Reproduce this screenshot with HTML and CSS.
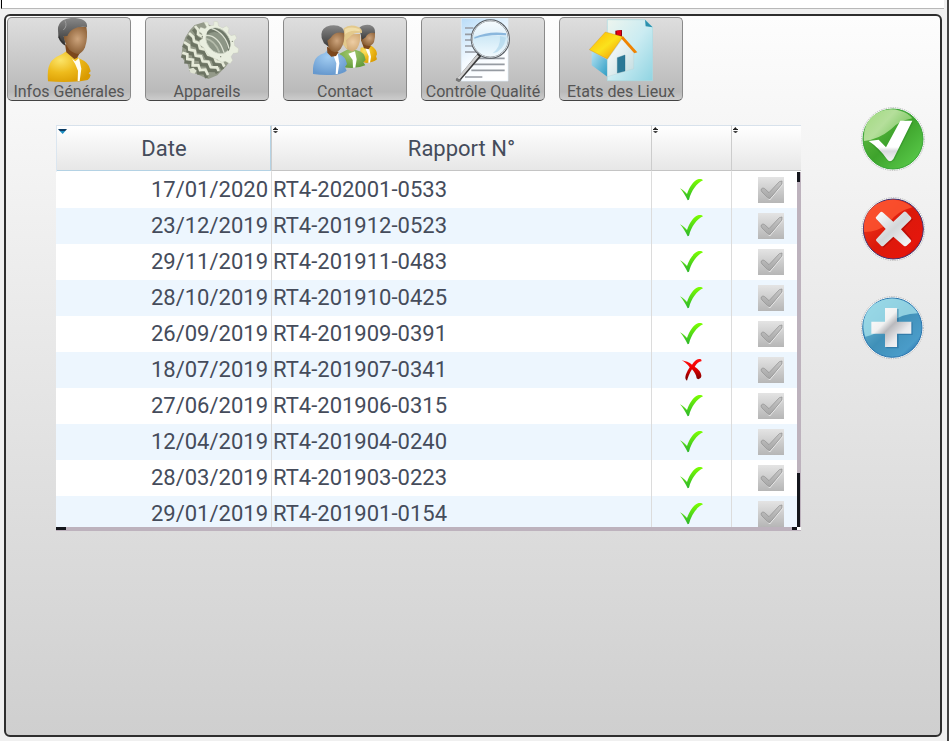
FILE: index.html
```
<!DOCTYPE html>
<html lang="fr">
<head>
    <meta charset="UTF-8">
    <meta name="viewport" content="width=device-width, initial-scale=1.0">
    <title>Contrôle Qualité</title>
    <link rel="stylesheet" href="styles.css">
</head>
<body>
    <!-- Shared icons -->
    <svg class="sprite" aria-hidden="true">
        <defs>
            <linearGradient id="g-ok" x1="0" y1="0" x2="0" y2="1"><stop offset="0" stop-color="#7cff00"/><stop offset="1" stop-color="#2cb52c"/></linearGradient>
            <linearGradient id="g-ko" x1="0" y1="0" x2="0" y2="1"><stop offset="0" stop-color="#ff1010"/><stop offset=".4" stop-color="#f00000"/><stop offset="1" stop-color="#6e0000"/></linearGradient>
            <linearGradient id="g-grey" x1="0" y1="0" x2="0" y2="1"><stop offset="0" stop-color="#c6c6c6"/><stop offset="1" stop-color="#a6a6a6"/></linearGradient>
            <linearGradient id="g-hair" x1="0" y1="0" x2="0" y2="1"><stop offset="0" stop-color="#888"/><stop offset="1" stop-color="#3a3a3a"/></linearGradient>
            <radialGradient id="g-skin" cx=".6" cy=".45" r=".6"><stop offset="0" stop-color="#cda47c"/><stop offset="1" stop-color="#84582f"/></radialGradient>
            <radialGradient id="g-fair" cx=".6" cy=".45" r=".6"><stop offset="0" stop-color="#edcda4"/><stop offset="1" stop-color="#cda46c"/></radialGradient>
            <radialGradient id="g-yellow" cx=".3" cy=".3" r=".8"><stop offset="0" stop-color="#fbe468"/><stop offset=".5" stop-color="#eebb1c"/><stop offset="1" stop-color="#d99a00"/></radialGradient>
            <radialGradient id="g-blue" cx=".45" cy=".3" r=".7"><stop offset="0" stop-color="#a2cdf2"/><stop offset="1" stop-color="#6799ce"/></radialGradient>
            <radialGradient id="g-green" cx=".45" cy=".3" r=".7"><stop offset="0" stop-color="#a2c96c"/><stop offset="1" stop-color="#649c3c"/></radialGradient>
        </defs>
        <symbol id="i-ok" viewBox="0 0 72 66">
            <path fill="url(#g-ok)" d="M0 28C9 33 16 39 21 45C28 25 40 6 54 1C60-1 67 1 69 4C50 12 34 36 27 62L23 64C16 50 9 38 0 28Z"/>
        </symbol>
        <symbol id="i-ko" viewBox="0 0 72 66">
            <path fill="url(#g-ko)" d="M5 4C17 6 28 10 36 17C42 8 49 1 57 0C62-1 66 2 64 7C57 8 50 13 44 23C57 31 65 42 64 52C63 60 53 63 50 58C49 48 43 38 36 31C28 43 24 56 21 65C15 61 15 55 18 46C21 38 25 31 29 25C22 15 14 9 5 4Z"/>
        </symbol>
        <symbol id="i-tick" viewBox="0 0 78 78">
            <path fill="none" stroke="#ececec" stroke-width="3" d="M12 42L35 69L74 22"/>
            <path fill="url(#g-grey)" stroke="#8c8c8c" stroke-width="2" stroke-linejoin="round" d="M10 36C13 32 17 33 20 35L33 47L64 14L72 12L71 22L39 61Q34 68 29 62L12 45Q8 40 10 36Z"/>
        </symbol>
        <symbol id="i-sort" viewBox="0 0 15 18">
            <path fill="#222" d="M7 0L12 6H15V9H0V6H2Z"/><path fill="#444" d="M0 12H15L9 18H6Z"/>
        </symbol>
    </svg>

    <div class="top-strip"></div>

    <div class="panel">
        <nav class="tabs">
            <button class="tab" type="button">
                <svg class="tab-icon" viewBox="111 54 192 192" aria-hidden="true">
                    <path fill="url(#g-yellow)" d="M144 244Q140 200 155 182Q168 169 187 162L200 153L240 176Q266 187 270 207L272 214L266 220L272 225Q270 236 263 240L241 244Q190 248 144 244Z"/>
                    <path fill="#fffdf2" d="M216 176L226 184L237 174L244 206L239 243L233 243L234 212Q227 191 216 176Z"/>
                    <path fill="#7c471c" d="M195 132L240 158L231 174L223 177L199 157Z"/>
                    <path fill="url(#g-skin)" d="M190 108L215 82L259 80Q265 112 255 142Q248 158 236 162Q221 161 208 149Q196 135 190 108Z"/>
                    <path fill="#333" d="M176 92L191 111L196 137Q181 130 175 112Z"/>
                    <path fill="url(#g-hair)" d="M176 102Q168 75 189 61Q215 48 245 58Q263 65 261 81Q236 78 222 86Q208 93 202 108L190 109L196 130Q181 122 176 102Z"/>
                    <path fill="none" stroke="#9c9c9c" stroke-width="3" d="M195 62Q203 79 190 90"/>
                </svg>
                Infos Générales
            </button>
            <button class="tab" type="button">
                <svg class="tab-icon" viewBox="525 54 192 192" aria-hidden="true">
                    <!-- barrel -->
                    <path fill="#949a89" d="M611 67L584 75L570 90L556 112L548 135L545 162L549 178L562 190L570 216L590 222L612 232L625 237L652 226L677 200L692 180L690 120L640 80Z"/>
                    <!-- helical teeth, shadow then light edge -->
                    <g fill="none" stroke-linejoin="miter" stroke="#6d7463" stroke-width="10">
                        <path d="M544 168L560 173L558 186L576 188L574 207L592 205L596 219L614 218L620 234"/>
                        <path d="M549 136L564 146L564 159L580 162L583 177L600 179L604 194L621 195L628 211L648 212L652 220"/>
                        <path d="M562 110L576 121L577 134L592 139L596 155L612 158L620 174L638 178L644 194L662 196L668 208"/>
                        <path d="M580 88L590 101L588 113L602 120"/>
                    </g>
                    <g fill="none" stroke-linejoin="miter" stroke="#e6ead9" stroke-width="8">
                        <path d="M547 158L562 163L562 177L579 179L578 196L595 196L600 210L616 209L624 225"/>
                        <path d="M552 126L567 136L568 149L584 152L587 167L603 169L608 184L625 185L632 201L651 202L656 213"/>
                        <path d="M567 99L580 111L582 124L596 129L600 145L616 148L624 164L642 168L648 184L666 186L673 200"/>
                        <path d="M585 78L595 90L594 103L607 110"/>
                    </g>
                    <path fill="#dfe3d2" d="M566 207L580 203L590 212L584 221L572 218Z"/>
                    <!-- front face -->
                    <path fill="#e9eedf" stroke="#c2c7b6" stroke-width="1" d="M612 67L623 66L627 78L641 76L642 64L653 65L656 78L668 84L679 78L687 85L684 98L693 107L705 104L710 114L702 124L704 137L716 146L714 158L700 160L693 170L698 181L690 191L676 184L666 187L650 178L633 171L621 160L611 143L600 135L598 122L608 116L606 101L595 93L602 82L615 86L620 81Z"/>
                    <ellipse fill="#8d9686" stroke="#d5dacb" stroke-width="2" cx="654" cy="122" rx="33" ry="42" transform="rotate(-38 654 122)"/>
                    <path fill="#6f7869" d="M620 104Q622 84 646 84Q676 90 690 124Q694 145 684 154Q682 120 660 101Q641 89 620 104Z"/>
                    <path fill="none" stroke="#dde2d3" stroke-width="4" d="M617 106Q655 104 672 158M634 85Q676 98 687 146"/>
                    <path fill="none" stroke="#b5bcab" stroke-width="5" d="M618 116Q644 122 658 157"/>
                    <g fill="#7c8372"><circle cx="607" cy="110" r="2"/><circle cx="662" cy="170" r="2"/><circle cx="697" cy="124" r="2"/></g>
                </svg>
                Appareils
            </button>
            <button class="tab" type="button">
                <svg class="tab-icon" viewBox="129 54 192 192" aria-hidden="true">
                    <path fill="url(#g-yellow)" d="M268 184L272 143L304 137Q321 148 321 163L318 169L321 178Q310 188 289 189Z"/>
                    <path fill="#fff" d="M286 145L297 145L303 170L300 188L295 188L296 169Z"/>
                    <path fill="#7c471c" d="M275 126L303 137L296 148L282 145Z"/>
                    <path fill="url(#g-skin)" d="M273 101L315 95Q317 132 300 138Q280 139 273 122Z"/>
                    <path fill="url(#g-hair)" d="M267 84Q280 72 300 75Q317 81 315 99Q294 95 287 112L276 119Z"/>
                    <path fill="url(#g-green)" d="M207 162L241 144L260 151Q285 157 287 180L280 187L286 196Q260 208 220 202Z"/>
                    <path fill="#fff" d="M235 161L255 154L260 178L256 203L249 203L248 180Z"/>
                    <path fill="url(#g-fair)" d="M223 103L270 102Q273 126 261 146L247 155L229 146L215 126Z"/>
                    <path fill="#e3c98c" d="M221 85Q239 71 263 80Q278 85 276 99Q251 96 239 112L228 121L232 148L216 130Z"/>
                    <path fill="#f0dda8" d="M225 87Q247 78 269 88L270 94Q239 88 226 103Z"/>
                    <path fill="url(#g-blue)" d="M129 222Q127 184 142 170Q151 162 164 159L175 148L207 162Q227 169 231 192L225 201L230 212Q218 221 197 224Q160 227 129 222Z"/>
                    <path fill="#fff" d="M190 166L203 160L208 190L203 222L197 222L199 190Z"/>
                    <path fill="#7c471c" d="M171 140L206 156L198 168L184 170L172 158Z"/>
                    <path fill="url(#g-skin)" d="M167 113L187 95L222 94Q226 125 213 145Q205 157 194 157Q172 151 167 113Z"/>
                    <path fill="url(#g-hair)" d="M155 114Q150 90 169 80Q196 70 216 83Q224 90 222 99Q194 93 182 113L172 122L176 140L162 130Z"/>
                </svg>
                Contact
            </button>
            <button class="tab" type="button">
                <svg class="tab-icon" viewBox="543 54 192 192" aria-hidden="true">
                    <defs>
                        <linearGradient id="g-doc" x1="0" y1="0" x2=".5" y2="1"><stop offset="0" stop-color="#b9dcf8"/><stop offset=".6" stop-color="#f4faff"/><stop offset="1" stop-color="#fff"/></linearGradient>
                        <linearGradient id="g-lens" x1="0" y1="0" x2="0" y2="1"><stop offset="0" stop-color="#f7fcff"/><stop offset=".4" stop-color="#e2f1fa"/><stop offset=".42" stop-color="#cde8f6"/><stop offset="1" stop-color="#f4fbff"/></linearGradient>
                    </defs>
                    <path fill="url(#g-doc)" stroke="#e2f0fa" stroke-width="2" d="M574 55H714V243H574Z"/>
                    <path stroke="#969ba2" stroke-width="5" d="M585 84H610M585 103H610M585 120H610M585 138H615M585 156H625M620 175H704M612 193H704M604 211H704M585 231H637"/>
                    <circle cx="661" cy="117" r="56" fill="url(#g-lens)" stroke="#555b61" stroke-width="6"/>
                    <circle cx="661" cy="117" r="55" fill="none" stroke="#d3d8dc" stroke-width="3"/>
                    <path fill="#8ab7dd" d="M613 112Q656 92 709 100L708 106Q660 101 613 116Z"/>
                    <path fill="#a8d2ea" opacity=".6" d="M690 108Q693 140 668 160Q701 153 708 113Z"/>
                    <path fill="#3b3b3b" d="M624 160L634 169L570 243Q562 247 558 239Z"/>
                    <path fill="#d0d0d0" d="M621 164L627 169L568 239L561 235Z"/>
                    <path fill="#777" d="M559 234L574 239L568 246L557 241Z"/>
                </svg>
                Contrôle Qualité
            </button>
            <button class="tab" type="button">
                <svg class="tab-icon" viewBox="147 54 192 192" aria-hidden="true">
                    <defs>
                        <linearGradient id="g-sheet" x1="0" y1="0" x2="1" y2="1"><stop offset="0" stop-color="#edf5ee"/><stop offset=".5" stop-color="#cbecf2"/><stop offset="1" stop-color="#90d4e2"/></linearGradient>
                        <linearGradient id="g-roof" x1="0" y1="0" x2="1" y2="1"><stop offset="0" stop-color="#ffb400"/><stop offset=".5" stop-color="#fbe21c"/><stop offset="1" stop-color="#f18a00"/></linearGradient>
                        <linearGradient id="g-wall" x1="0" y1="0" x2="1" y2="1"><stop offset="0" stop-color="#b5e2f2"/><stop offset="1" stop-color="#2d9dc4"/></linearGradient>
                        <linearGradient id="g-front" x1="0" y1="0" x2="1" y2="1"><stop offset="0" stop-color="#fff"/><stop offset="1" stop-color="#c1dce0"/></linearGradient>
                    </defs>
                    <path fill="url(#g-sheet)" stroke="#aadbe3" stroke-width="2" d="M202 59H315L338 82V242H202Z"/>
                    <path fill="#2b91ae" d="M315 59L338 82L317 79Z"/>
                    <path fill="url(#g-wall)" d="M155 154L202 179V230L155 196Z"/>
                    <path fill="url(#g-front)" stroke="#b5cdd0" stroke-width="1" d="M202 179L247 116L281 157V206L202 230Z"/>
                    <path fill="#2b7896" stroke="#196480" stroke-width="1" d="M232 173L255 165V213L232 219Z"/>
                    <path fill="#8c0010" d="M226 92L246 90V112L226 108Z"/><path fill="#e60012" d="M230 92L243 91V106L230 104Z"/>
                    <path fill="url(#g-roof)" stroke="#c98a1a" stroke-width="1" d="M148 149L196 96L249 110L202 177Z"/>
                    <path fill="#f08300" d="M243 115L249 109L292 157L283 160Z"/>
                </svg>
                Etats des Lieux
            </button>
        </nav>

        <main class="content">
            <div class="grid-frame">
                <table class="grid">
                    <colgroup><col class="col-date"><col><col class="col-state"><col class="col-tick"></colgroup>
                    <thead>
                        <tr>
                            <th class="sorted"><svg class="sort-icon" viewBox="0 0 27 15" aria-hidden="true"><path fill="#0b3d66" d="M0 0H27L22 6H5Z"/><path fill="#1e8fc2" d="M5 6H22L14 15Z"/></svg>Date</th>
                            <th><svg class="sort-icon small"><use href="#i-sort"/></svg>Rapport N°</th>
                            <th><svg class="sort-icon small"><use href="#i-sort"/></svg></th>
                            <th><svg class="sort-icon small"><use href="#i-sort"/></svg></th>
                        </tr>
                    </thead>
                    <tbody>
                        <tr><td class="date">17/01/2020</td><td>RT4-202001-0533</td><td class="state"><svg class="state-icon"><use href="#i-ok"/></svg></td><td class="tick"><label class="tick-box"><input type="checkbox" aria-label="RT4-202001-0533"><svg><use href="#i-tick"/></svg></label></td></tr>
                        <tr><td class="date">23/12/2019</td><td>RT4-201912-0523</td><td class="state"><svg class="state-icon"><use href="#i-ok"/></svg></td><td class="tick"><label class="tick-box"><input type="checkbox" aria-label="RT4-201912-0523"><svg><use href="#i-tick"/></svg></label></td></tr>
                        <tr><td class="date">29/11/2019</td><td>RT4-201911-0483</td><td class="state"><svg class="state-icon"><use href="#i-ok"/></svg></td><td class="tick"><label class="tick-box"><input type="checkbox" aria-label="RT4-201911-0483"><svg><use href="#i-tick"/></svg></label></td></tr>
                        <tr><td class="date">28/10/2019</td><td>RT4-201910-0425</td><td class="state"><svg class="state-icon"><use href="#i-ok"/></svg></td><td class="tick"><label class="tick-box"><input type="checkbox" aria-label="RT4-201910-0425"><svg><use href="#i-tick"/></svg></label></td></tr>
                        <tr><td class="date">26/09/2019</td><td>RT4-201909-0391</td><td class="state"><svg class="state-icon"><use href="#i-ok"/></svg></td><td class="tick"><label class="tick-box"><input type="checkbox" aria-label="RT4-201909-0391"><svg><use href="#i-tick"/></svg></label></td></tr>
                        <tr><td class="date">18/07/2019</td><td>RT4-201907-0341</td><td class="state"><svg class="state-icon"><use href="#i-ko"/></svg></td><td class="tick"><label class="tick-box"><input type="checkbox" aria-label="RT4-201907-0341"><svg><use href="#i-tick"/></svg></label></td></tr>
                        <tr><td class="date">27/06/2019</td><td>RT4-201906-0315</td><td class="state"><svg class="state-icon"><use href="#i-ok"/></svg></td><td class="tick"><label class="tick-box"><input type="checkbox" aria-label="RT4-201906-0315"><svg><use href="#i-tick"/></svg></label></td></tr>
                        <tr><td class="date">12/04/2019</td><td>RT4-201904-0240</td><td class="state"><svg class="state-icon"><use href="#i-ok"/></svg></td><td class="tick"><label class="tick-box"><input type="checkbox" aria-label="RT4-201904-0240"><svg><use href="#i-tick"/></svg></label></td></tr>
                        <tr><td class="date">28/03/2019</td><td>RT4-201903-0223</td><td class="state"><svg class="state-icon"><use href="#i-ok"/></svg></td><td class="tick"><label class="tick-box"><input type="checkbox" aria-label="RT4-201903-0223"><svg><use href="#i-tick"/></svg></label></td></tr>
                        <tr><td class="date">29/01/2019</td><td>RT4-201901-0154</td><td class="state"><svg class="state-icon"><use href="#i-ok"/></svg></td><td class="tick"><label class="tick-box"><input type="checkbox" aria-label="RT4-201901-0154"><svg><use href="#i-tick"/></svg></label></td></tr>
                    </tbody>
                </table>
                <div class="scroll-v"></div>
                <div class="scroll-h"></div>
            </div>

            <div class="actions">
                <div class="action-group">
                    <button class="action" type="button" aria-label="Valider">
                        <svg viewBox="63 51 192 192" aria-hidden="true">
                            <defs>
                                <linearGradient id="g-a1" x1="0" y1="0" x2="1" y2="1"><stop offset="0" stop-color="#6cc24a"/><stop offset=".5" stop-color="#3ea32c"/><stop offset=".85" stop-color="#55c445"/><stop offset="1" stop-color="#1c7c1c"/></linearGradient>
                                <linearGradient id="g-pale" x1="0" y1="0" x2="1" y2=".6"><stop offset="0" stop-color="#a6dc84"/><stop offset=".5" stop-color="#c0e4a6"/><stop offset="1" stop-color="#7cc860"/></linearGradient>
                                <linearGradient id="g-mark" x1="0" y1="0" x2="0" y2="1"><stop offset="0" stop-color="#fff"/><stop offset=".65" stop-color="#fff"/><stop offset=".75" stop-color="#d9d9dd"/><stop offset="1" stop-color="#f5f5f5"/></linearGradient>
                            </defs>
                            <circle class="halo" cx="159" cy="147" r="94"/>
                            <circle cx="159" cy="147" r="90" fill="url(#g-a1)" stroke="#36a335" stroke-width="3"/>
                            <path fill="url(#g-pale)" opacity=".9" d="M72 153Q68 103 101 76Q136 49 180 62Q205 69 217 85Q174 93 153 118Q116 149 72 153Z"/>
                            <path fill="#176c17" opacity=".25" d="M91 159L119 155L137 176L185 96L220 96L163 211L150 218Z"/>
                            <path fill="url(#g-mark)" d="M86 153L116 149L138 172L181 92H217L160 207Q150 220 141 208Q120 176 86 153Z"/>
                        </svg>
                    </button>
                    <button class="action" type="button" aria-label="Annuler">
                        <svg viewBox="63 321 192 192" aria-hidden="true">
                            <defs>
                                <linearGradient id="g-a2" x1="0" y1="0" x2="1" y2="1"><stop offset="0" stop-color="#f74420"/><stop offset=".5" stop-color="#db190b"/><stop offset=".8" stop-color="#e5160c"/><stop offset="1" stop-color="#9c0505"/></linearGradient>
                                <linearGradient id="g-cross" x1="0" y1="0" x2="1" y2="1"><stop offset="0" stop-color="#fff"/><stop offset=".5" stop-color="#d3d7d9"/><stop offset="1" stop-color="#fafafa"/></linearGradient>
                            </defs>
                            <circle class="halo" cx="160" cy="417" r="94"/>
                            <circle cx="160" cy="417" r="90" fill="url(#g-a2)" stroke="#3c3474" stroke-width="3"/>
                            <path fill="#fb5330" opacity=".85" d="M72 426Q66 368 112 341Q171 313 217 352Q171 364 147 398Q115 426 72 426Z"/>
                            <path fill="#8c0000" opacity=".4" d="M127 370L165 396L202 372L219 388L191 417L216 448L198 471L164 443L131 473L110 454L138 420L111 390Z"/>
                            <path fill="url(#g-cross)" d="M121 367Q124 364 128 367L160 395L191 366Q195 363 199 367L213 382Q216 386 212 389L183 418L212 449Q215 453 212 456L199 468Q195 470 191 467L160 440L131 467Q127 470 123 467L109 453Q106 449 110 446L137 417L109 387Q105 383 109 380Z"/>
                        </svg>
                    </button>
                </div>
                <button class="action" type="button" aria-label="Ajouter">
                    <svg viewBox="63 618 192 192" aria-hidden="true">
                        <defs>
                            <linearGradient id="g-a3" x1="0" y1="0" x2="1" y2="1"><stop offset="0" stop-color="#7fcbe0"/><stop offset=".5" stop-color="#4090b8"/><stop offset=".8" stop-color="#4a9cc9"/><stop offset="1" stop-color="#124f94"/></linearGradient>
                            <linearGradient id="g-plus" x1="0" y1="0" x2="1" y2="1"><stop offset="0" stop-color="#fff"/><stop offset=".35" stop-color="#f1f1f1"/><stop offset=".48" stop-color="#b9b9bd"/><stop offset=".7" stop-color="#e9e9ec"/><stop offset="1" stop-color="#fff"/></linearGradient>
                        </defs>
                        <circle class="halo" cx="157" cy="713" r="93"/>
                        <circle cx="157" cy="713" r="89" fill="url(#g-a3)" stroke="#2873ad" stroke-width="3"/>
                        <path fill="#a2dfea" opacity=".8" d="M76 740Q58 683 97 646Q147 610 202 638Q222 650 234 670Q184 671 151 698Q118 731 76 740Z"/>
                        <path fill="#104c80" opacity=".35" d="M139 657H176V697H218V735H176V775H139Z"/>
                        <path fill="url(#g-plus)" d="M135 654H171V695H214V731H171V771H135V731H94V695H135Z"/>
                    </svg>
                </button>
            </div>
        </main>
    </div>
</body>
</html>
```
FILE: styles.css
```
:root {
    --line: #2e2e2e;
    --text: #454c5b;
    --row-alt: #edf6fe;
    --bar: #bdb2bd;
    --thumb: #14161c;
}

* {
    box-sizing: border-box;
    margin: 0;
    padding: 0;
}

body {
    font-family: Roboto, "Liberation Sans", sans-serif;
    display: flex;
    flex-direction: column;
    min-height: 100vh;
    background: #f0f0f0;
    color: var(--text);
    border-right: 2px solid #444;
}

.sprite {
    position: absolute;
    width: 0;
    height: 0;
}

.top-strip {
    height: 9px;
    margin: 0 3px 5px 1px;
    background: #fff;
    border-left: 1px solid #000;
    border-bottom: 1px solid #b8b8b8;
}

/* Main panel */
.panel {
    flex: 1;
    margin: 0 5px 4px 4px;
    padding: 1px;
    border: 2px solid var(--line);
    border-radius: 6px;
    background: linear-gradient(#fdfdfd, #cfcfcf);
}

/* Tabs */
.tabs {
    display: flex;
    gap: 14px;
}

.tab {
    width: 124px;
    font-family: inherit;
    font-size: 16px;
    line-height: 16px;
    color: #555;
    text-align: center;
    white-space: nowrap;
    background: linear-gradient(#dedede, #bababa 90%, #cccccc);
    border: 1px solid #8a8a8a;
    border-bottom-color: #444;
    border-radius: 5px;
    cursor: pointer;
}

.tab-icon {
    display: block;
    width: 64px;
    height: 64px;
    margin: 0 auto 2px;
}

.content {
    display: flex;
    align-items: flex-start;
    padding: 6px 14px 0 49px;
}

/* Table */
.grid-frame {
    position: relative;
    flex: 1;
    height: 406px;
    margin-top: 18px;
    margin-right: 60px;
    overflow: hidden;
}

.grid {
    width: 100%;
    table-layout: fixed;
    border-collapse: separate;
    border-spacing: 0;
    font-size: 22px;
    line-height: 26px;
}

.col-date {
    width: 216px;
}

.col-state {
    width: 80px;
}

.col-tick {
    width: 69px;
}

.grid th {
    position: relative;
    height: 47px;
    font-weight: 400;
    text-align: center;
    background: linear-gradient(#fff, #e6e6e6);
    border-top: 1px solid #d8e2ec;
    border-right: 1px solid #ccc;
    border-bottom: 1px solid #fff;
    box-shadow: inset 0 -1px #c4c4c4;
}

.grid th:last-child {
    border-right: none;
}

.grid th.sorted {
    border-left: 1px solid #dbe6f0;
    box-shadow: inset -1px -1px #b4d2e4;
}

.sort-icon {
    position: absolute;
    top: 3px;
    left: 1px;
    width: 9px;
    height: 5px;
}

.sort-icon.small {
    top: 1px;
    width: 5px;
    height: 6px;
}

.grid td {
    height: 36px;
    padding: 0 1px;
    background: #fff;
    border-right: 1px solid #dcdcdc;
}

.grid tbody tr:nth-child(even) td {
    background: var(--row-alt);
}

.grid td:last-child {
    border-right: none;
}

.grid .date {
    padding-right: 3px;
    text-align: right;
}

.state {
    text-align: center;
}

.state-icon {
    display: block;
    width: 24px;
    height: 22px;
    margin: 0 auto;
}

.grid .tick {
    padding: 0 0 0 26px;
}

.tick-box {
    position: relative;
    display: block;
    width: 26px;
    height: 26px;
}

.tick-box input {
    display: block;
    width: 26px;
    height: 26px;
    appearance: none;
    background: linear-gradient(#e4e4e4, #b6b6b6);
}

.tick-box svg {
    position: absolute;
    top: 0;
    left: 0;
    width: 26px;
    height: 26px;
    pointer-events: none;
}

/* Thin scrollbars over the table edges */
.scroll-v {
    position: absolute;
    top: 47px;
    right: 0;
    bottom: 4px;
    width: 4px;
    border-right: 1px solid var(--bar);
    background: linear-gradient(var(--thumb) 10px, var(--bar) 10px, var(--bar) 301px, var(--thumb) 301px);
}

.scroll-h {
    position: absolute;
    left: 0;
    right: 0;
    bottom: 0;
    height: 4px;
    border-bottom: 1px solid var(--bar);
    background: linear-gradient(to right, var(--thumb) 10px, var(--bar) 10px, var(--bar) calc(100% - 9px), var(--thumb) calc(100% - 9px), var(--thumb) calc(100% - 4px), #fff calc(100% - 4px));
}

/* Round action buttons */
.actions {
    display: flex;
    flex-direction: column;
    gap: 35px;
}

.action-group {
    display: flex;
    flex-direction: column;
    gap: 26px;
}

.action {
    width: 64px;
    height: 64px;
    background: none;
    border: none;
    border-radius: 50%;
    cursor: pointer;
}

.action svg {
    display: block;
    width: 64px;
    height: 64px;
}

.halo {
    fill: #fff;
    stroke: #9a9a9a;
    stroke-width: 2;
    stroke-dasharray: 4 3;
}
```
